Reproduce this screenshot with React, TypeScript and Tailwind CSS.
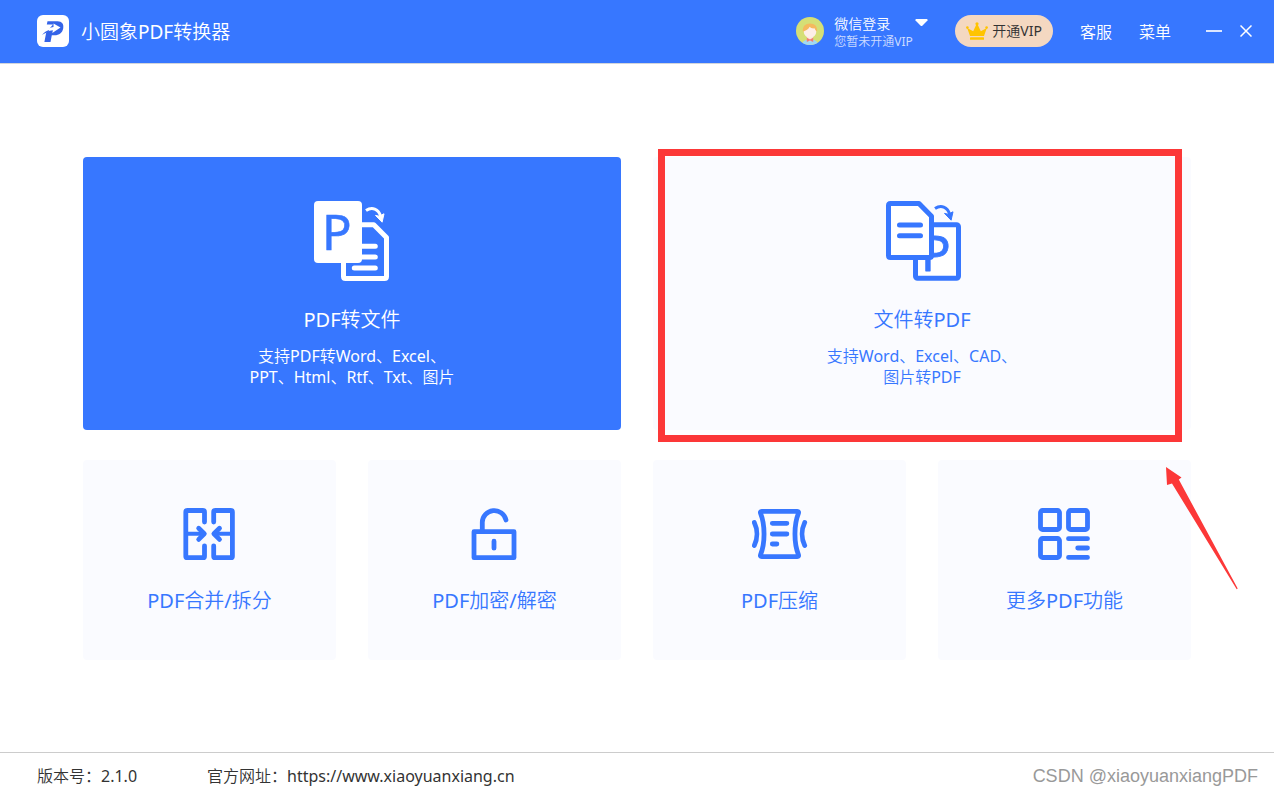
import type { ReactNode } from "react";

type Tool = {
  title: string;
  icon: ReactNode;
};

function Logo() {
  return (
    <svg viewBox="0 0 32 32" className="size-8" aria-hidden="true">
      <rect width="32" height="32" rx="6" fill="#fff" />
      <path d="M10.500 6.200H20.500c4.500 0 6.600 3 5.700 7.200-.9 4.400-4 6.800-8.600 6.800h-2.800L13.500 27H7.400l1.800-9.500L16 9.500H9.800z" fill="#3464e8" />
      <path d="M4.500 20.500c2-4.600 5.600-7.400 12-8.600V8.400l7 4.200-8.200 5.400.6-2.800c-4.200.3-7.800 2-11.400 5.300z" fill="#fff" />
      <path d="M5 20.200c2-3 4.500-4.600 7.200-5.200l-.6 2.100c-2.500.6-4.400 1.500-6.600 3.100z" fill="#3464e8" />
    </svg>
  );
}

function Avatar() {
  return (
    <svg viewBox="0 0 28 28" className="size-7" aria-hidden="true">
      <clipPath id="avatar">
        <circle cx="14" cy="14" r="14" />
      </clipPath>
      <g clipPath="url(#avatar)">
        <rect width="28" height="28" fill="#d5df76" />
        <path d="M6 28c0-3.500 3-5.600 8-5.600s8 2.100 8 5.600z" fill="#9fd8f5" />
        <path d="M11.300 18h5.400v5L14 24.500 11.300 23z" fill="#fbe3da" />
        <circle cx="14" cy="14.500" r="6.300" fill="#fdeee8" />
        <path d="M6.900 14.800C6.200 9.500 9.500 6.600 14 6.600s7.800 2.900 7.100 8.200c-1.200-.8-2-2-2.600-3.500-2 .4-3.500-.2-4.800-1.500-1.300 2.700-3.600 3.600-6.800 5z" fill="#f5b95e" />
        <path d="M10.800 20.800l3.200 1.600 3.200-1.600v4.200L14 23.400l-3.200 1.600z" fill="#f27c74" />
      </g>
    </svg>
  );
}

function Crown() {
  return (
    <svg viewBox="0 0 22 18" className="h-[18px] w-[22px]" fill="#ffc400" aria-hidden="true">
      <path d="M4 14L1.200 6l6 3.300 3-6.500h1.600l3 6.500 6-3.300L18 14z" />
      <circle cx="11" cy="1.800" r="1.600" />
      <circle cx="1.400" cy="5.600" r="1.300" />
      <circle cx="20.600" cy="5.600" r="1.300" />
      <rect x="4" y="15.300" width="14" height="2.500" rx=".5" />
    </svg>
  );
}

function PdfToFileIcon() {
  return (
    <svg viewBox="0 0 80 84" className="h-[84px] w-20" fill="none" aria-hidden="true">
      <path d="M31.500 56v21.500q0 2 2 2h39q2 0 2-2V38.500L61.800 25.800H46" stroke="#fff" strokeWidth="5" strokeLinejoin="round" />
      <path d="M46 47.300h17.300M46 58h17.300M42.300 69h21" stroke="#fff" strokeWidth="5" strokeLinecap="round" />
      <rect x="2" y="2" width="48" height="62" rx="4" fill="#fff" />
      <text x="10" y="51" fontSize="49" fill="#3777ff" stroke="#3777ff" strokeWidth=".6" className="font-['Noto_Sans']">P</text>
      <path d="M54 11.600c6-4.200 12.500-1.800 14.800 6" stroke="#fff" strokeWidth="3" />
      <path d="M63.500 16.400l3.700.8 4.800-2.400-1.900 8.400z" fill="#fff" stroke="#fff" />
    </svg>
  );
}

function FileToPdfIcon() {
  return (
    <svg viewBox="0 0 80 84" className="h-[84px] w-20" fill="none" stroke="#3777ff" strokeWidth="5" strokeLinejoin="round" aria-hidden="true">
      <rect x="33.500" y="25.800" width="43" height="53.500" rx="2" fill="#fff" />
      <text x="39" y="72" fontSize="49" fill="#3777ff" strokeWidth=".8" className="font-['Noto_Sans']">P</text>
      <path d="M8.500 4.500H37l12.500 12.700v39.300q0 2-2 2h-39q-2 0-2-2v-50q0-2 2-2z" fill="#fff" />
      <path d="M17.500 26h21M17.500 36.700h21" strokeLinecap="round" />
      <path d="M53 9.600c6-4.200 12.500-1.800 14.800 6" strokeWidth="3" />
      <path d="M62.500 14.400l3.700.8 4.800-2.400-1.900 8.400z" fill="#3777ff" strokeWidth="1" />
    </svg>
  );
}

function ToolSvg({ children }: { children: ReactNode }) {
  return (
    <svg
      viewBox="0.500 0 56 56"
      className="size-14"
      fill="none"
      stroke="#3777ff"
      strokeWidth="4.800"
      strokeLinecap="round"
      strokeLinejoin="round"
      aria-hidden="true"
    >
      {children}
    </svg>
  );
}

const tools: Tool[] = [
  {
    title: "PDF合并/拆分",
    icon: (
      <ToolSvg>
        <path d="M23 16V6q0-1.500-1.500-1.500H5.800q-1.500 0-1.500 1.500v44.200q0 1.500 1.500 1.500h15.700q1.500 0 1.500-1.500V39.800" />
        <path d="M32.200 16V6q0-1.500 1.500-1.500h15.700q1.500 0 1.500 1.500v44.200q0 1.500-1.500 1.500H33.700q-1.500 0-1.500-1.500V39.800" />
        <path d="M5 27.800h16M50 27.800H34" strokeWidth="4" />
        <path d="M17.200 22.200l5.600 5.600-5.600 5.600M38 22.200l-5.600 5.600L38 33.400" />
      </ToolSvg>
    ),
  },
  {
    title: "PDF加密/解密",
    icon: (
      <ToolSvg>
        <path d="M7.500 25.700h40v26h-40zM27.500 35.200v7" />
        <path d="M15.800 25v-8.700A12 12 0 0 1 39.500 14" />
      </ToolSvg>
    ),
  },
  {
    title: "PDF压缩",
    icon: (
      <ToolSvg>
        <path d="M10.200 5.400h35.600q1.800 0 1.100 2C42.300 19 42.300 37 46.900 48.600q.7 2-1.100 2H10.200q-1.800 0-1.100-2C13.700 37 13.700 19 9.100 7.400q-.7-2 1.100-2z" />
        <path d="M20.800 17.300h14.600M20.800 28h14.600M20.800 38h4.600" />
        <path d="M2.800 16.500c3.400 7 3.400 16 0 23M53.200 16.500c-3.400 7-3.400 16 0 23" />
      </ToolSvg>
    ),
  },
  {
    title: "更多PDF功能",
    icon: (
      <ToolSvg>
        <rect x="4" y="4.500" width="19" height="19" rx="2" />
        <rect x="32" y="4.500" width="19" height="19" rx="2" />
        <rect x="4" y="32.500" width="19" height="19" rx="2" />
        <path d="M32 32.700h19M41.200 42H51M32 51.400h19" />
      </ToolSvg>
    ),
  },
];

function Header() {
  return (
    <header className="flex h-16 items-center justify-between border-b border-gray-300 bg-[#3777ff] pr-[22px] pb-px pl-[37px] text-white">
      <div className="flex items-center gap-3">
        <Logo />
        <h1 className="pt-0.5 text-[19px] leading-7">小圆象PDF转换器</h1>
      </div>

      <div className="flex items-center gap-[27px]">
        <button className="flex items-center gap-2.5 text-left">
          <Avatar />
          <span className="flex">
            <span className="flex w-[81px] flex-col pt-1">
              <span className="text-sm leading-[18px]">微信登录</span>
              <span className="text-xs leading-[18px] text-[#cddcff]">您暂未开通VIP</span>
            </span>
            <svg viewBox="0 0 13 8" className="mt-2 h-2 w-[13px]" fill="#fff" aria-hidden="true">
              <path d="M1 0h11q1 .6.500 1.500L7.300 6.700q-.8.700-1.600 0L.5 1.500Q0 .6 1 0z" />
            </svg>
          </span>
        </button>
        <button className="flex h-8 items-center gap-1 rounded-full bg-[#f4d8c1] px-[11px] text-sm text-[#333]">
          <Crown />
          开通VIP
        </button>
        <a href="#service" className="pt-0.5">客服</a>
        <button className="pt-0.5">菜单</button>
        <div className="ml-2 flex items-center gap-[18px]">
          <button aria-label="最小化">
            <svg viewBox="0 0 16 16" className="size-4" stroke="#dbe6ff" strokeWidth="2" aria-hidden="true">
              <path d="M0 8h16" />
            </svg>
          </button>
          <button aria-label="关闭">
            <svg viewBox="0 0 12 12" className="size-3" stroke="#fff" strokeWidth="1.500" aria-hidden="true">
              <path d="M.5.500l11 11M11.500.500l-11 11" />
            </svg>
          </button>
        </div>
      </div>
    </header>
  );
}

export default function App() {
  return (
    <div className="flex min-h-screen flex-col bg-white font-['Noto_Sans','Noto_Sans_CJK_SC_DemiLight','Noto_Sans_CJK_SC_Light','Noto_Sans_CJK_SC',sans-serif] text-base">
      <Header />

      <main className="flex flex-1 flex-col justify-center gap-[30px] px-[83px]">
        <div className="grid grid-cols-2 gap-8">
          <button className="flex flex-col items-center rounded bg-[#3777ff] pt-[42px] pb-[42px] text-white">
            <PdfToFileIcon />
            <span className="mt-[23px] text-xl leading-7">PDF转文件</span>
            <span className="mt-3 leading-[21px]">
              支持PDF转Word、Excel、
              <br />
              PPT、Html、Rtf、Txt、图片
            </span>
          </button>

          <div className="relative flex">
            <button className="flex flex-1 flex-col items-center rounded bg-[#fafbff] pt-[42px] pb-[42px] text-[#3777ff]">
              <FileToPdfIcon />
              <span className="mt-[23px] text-xl leading-7">文件转PDF</span>
              <span className="mt-3 leading-[21px]">
                支持Word、Excel、CAD、
                <br />
                图片转PDF
              </span>
            </button>
            <div className="pointer-events-none absolute -top-2 right-[9px] -bottom-3 left-[5px] border-[7px] border-[#fc3838]" />
          </div>
        </div>

        <div className="relative grid grid-cols-4 gap-8">
          {tools.map((tool) => (
            <button key={tool.title} className="flex h-[200px] flex-col items-center rounded bg-[#fafbff] pt-[46px] text-[#3777ff]">
              {tool.icon}
              <span className="mt-[25px] text-xl leading-7">{tool.title}</span>
            </button>
          ))}
          <svg viewBox="0 0 72 123" className="pointer-events-none absolute top-[7px] -right-[47px] h-[123px] w-[72px]" fill="#fc3838" aria-hidden="true">
            <path d="M0 0l15.500 10.500-2.700 2L71.700 121.500l-1 .8L6 16.500 1 18z" />
          </svg>
        </div>
      </main>

      <footer className="flex h-[43px] items-center justify-between border-t border-[#ccc] pt-1 pr-4 pl-[37px] text-[#333]">
        <div className="flex gap-[70px]">
          <span>版本号：2.1.0</span>
          <span>
            官方网址：<a href="https://www.xiaoyuanxiang.cn">https://www.xiaoyuanxiang.cn</a>
          </span>
        </div>
        <span className="font-['Liberation_Sans',sans-serif] text-lg text-[#999]">CSDN @xiaoyuanxiangPDF</span>
      </footer>
    </div>
  );
}
